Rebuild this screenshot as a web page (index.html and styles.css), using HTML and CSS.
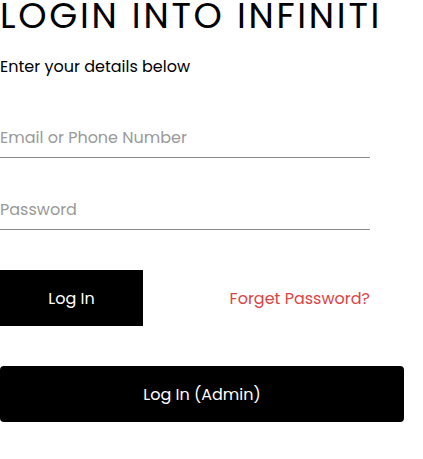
FILE: index.html
```html
<!DOCTYPE html>
<html>
<head>
<meta charset="utf-8">
<link rel="stylesheet" href="styles.css">
</head>
<body>
<main class="login">
  <h1 class="title">LOGIN INTO INFINITI</h1>
  <p class="subtitle">Enter your details below</p>
  <form class="form">
    <input class="field" type="text" placeholder="Email or Phone Number">
    <input class="field" type="password" placeholder="Password">
    <div class="actions">
      <button type="button" class="btn btn-login">Log In</button>
      <a class="forgot" href="#">Forget Password?</a>
    </div>
    <button type="button" class="btn btn-admin">Log In (Admin)</button>
  </form>
</main>
</body>
</html>
```
FILE: styles.css
```css
* { box-sizing: border-box; }
html, body { margin: 0; padding: 0; background: #fff; }
body {
  font-family: "Poppins", "Inter", "Open Sans", sans-serif;
  color: #000;
}
.login { width: 404px; }
.title {
  margin: 0;
  font-family: "Poppins", "Inter", sans-serif;
  font-weight: 400;
  font-size: 36px;
  line-height: 32px;
  letter-spacing: 2.7px;
  white-space: nowrap;
}
.subtitle {
  margin: 23px 0 0;
  font-size: 16px;
  line-height: 24px;
}
.form {
  display: flex;
  flex-direction: column;
  margin-top: 47px;
}
.field {
  width: 370px;
  border: 0;
  border-bottom: 1px solid #8a8a8a;
  padding: 0 0 7px;
  font: inherit;
  font-size: 16px;
  line-height: 24px;
  outline: none;
  background: transparent;
}
.field::placeholder { color: #999; }
.field + .field { margin-top: 40px; }
.actions {
  display: flex;
  align-items: center;
  justify-content: space-between;
  width: 370px;
  margin-top: 40px;
}
.btn {
  border: 0;
  background: #000;
  color: #fff;
  font: inherit;
  font-size: 16px;
  cursor: pointer;
}
.btn-login { width: 143px; height: 56px; }
.forgot {
  color: #db4444;
  text-decoration: none;
  font-size: 16px;
}
.btn-admin {
  width: 404px;
  height: 56px;
  margin-top: 40px;
  border-radius: 4px;
}
```
